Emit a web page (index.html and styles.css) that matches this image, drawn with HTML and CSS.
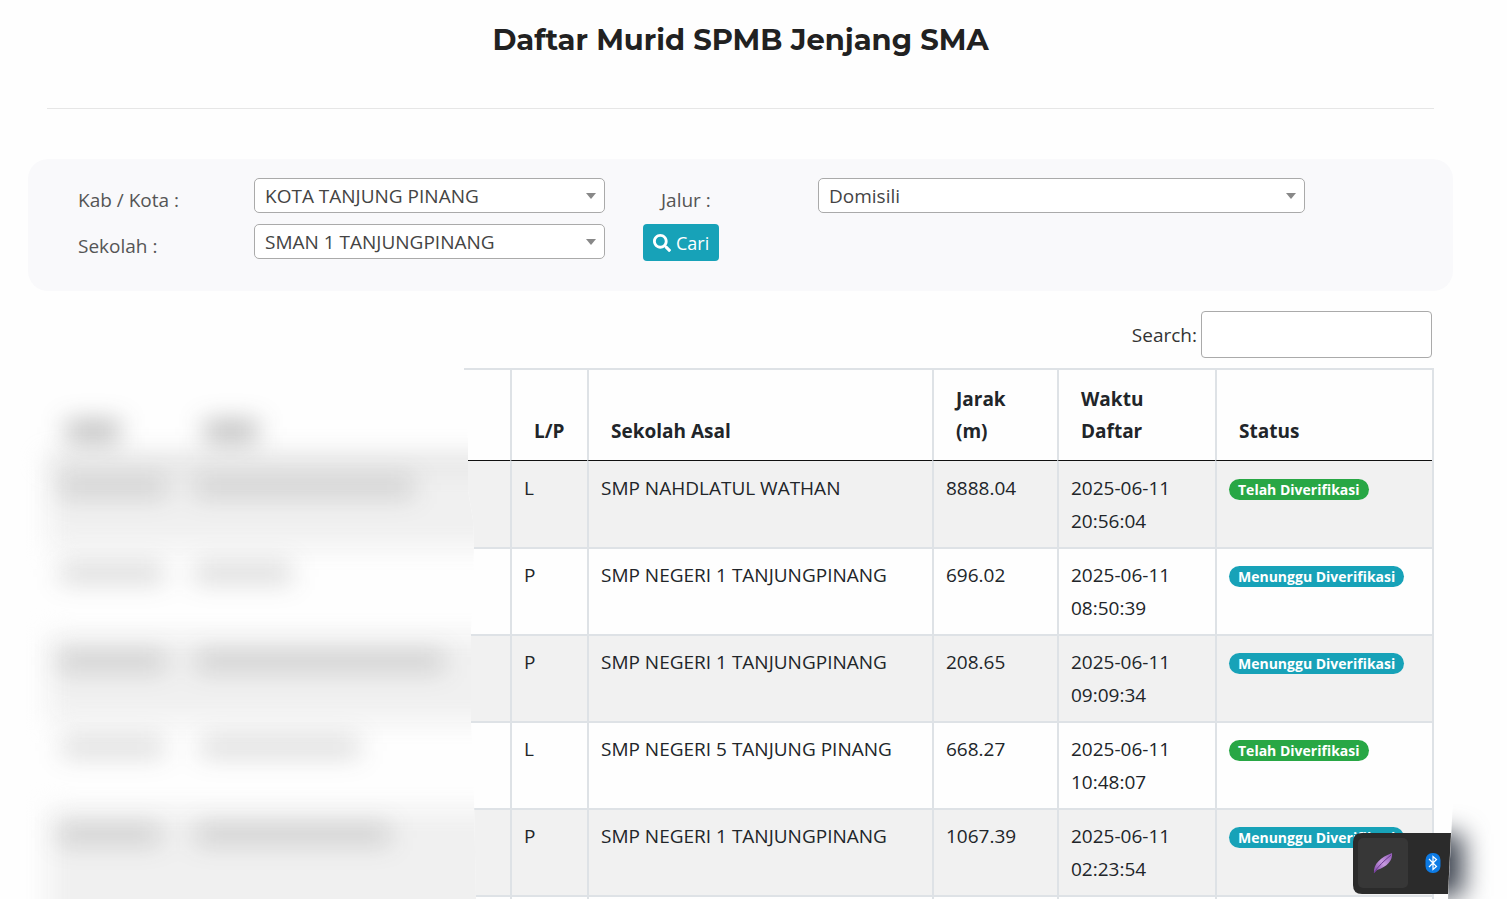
FILE: index.html
```html
<!DOCTYPE html>
<html lang="id">
<head>
  <meta charset="UTF-8">
  <meta name="viewport" content="width=device-width, initial-scale=1">
  <title>Daftar Murid SPMB Jenjang SMA</title>
  <link rel="stylesheet" href="styles.css">
</head>
<body>

  <main class="page">
    <h1>Daftar Murid SPMB Jenjang SMA</h1>
    <hr>

    <form class="filter">
      <label for="kota">Kab / Kota :</label>
      <div class="select-box">
        <select id="kota"><option>KOTA TANJUNG PINANG</option></select>
      </div>
      <label for="jalur" class="label-jalur">Jalur :</label>
      <div class="select-box">
        <select id="jalur"><option>Domisili</option></select>
      </div>
      <label for="sekolah">Sekolah :</label>
      <div class="select-box">
        <select id="sekolah"><option>SMAN 1 TANJUNGPINANG</option></select>
      </div>
      <div class="filter-action">
        <button type="button" class="cari-btn">
          <svg width="18" height="18" viewBox="0 0 512 512" fill="currentColor" aria-hidden="true"><path d="M505 442.700L405.300 343c-4.500-4.500-10.600-7-17-7H372c27.600-35.300 44-79.700 44-128C416 93.100 322.900 0 208 0S0 93.100 0 208s93.100 208 208 208c48.300 0 92.700-16.400 128-44v16.300c0 6.400 2.500 12.500 7 17l99.700 99.700c9.400 9.400 24.600 9.400 33.900 0l28.300-28.300c9.400-9.400 9.400-24.600.1-34zM208 336c-70.700 0-128-57.200-128-128 0-70.700 57.200-128 128-128 70.700 0 128 57.200 128 128 0 70.700-57.200 128-128 128z"/></svg>
          Cari
        </button>
      </div>
    </form>

    <section class="daftar">
      <div class="search">
        <label for="search">Search:</label>
        <input type="search" id="search">
      </div>

      <table>
        <colgroup>
          <col>
          <col class="col-nama">
          <col class="col-lp">
          <col class="col-asal">
          <col class="col-jarak">
          <col class="col-waktu">
          <col class="col-status">
        </colgroup>
        <thead>
          <tr>
            <th></th>
            <th></th>
            <th>L/P</th>
            <th>Sekolah Asal</th>
            <th>Jarak (m)</th>
            <th>Waktu Daftar</th>
            <th>Status</th>
          </tr>
        </thead>
        <tbody>
          <tr>
            <td></td>
            <td></td>
            <td>L</td>
            <td>SMP NAHDLATUL WATHAN</td>
            <td>8888.04</td>
            <td>2025-06-11 20:56:04</td>
            <td><span class="badge badge-success">Telah Diverifikasi</span></td>
          </tr>
          <tr>
            <td></td>
            <td></td>
            <td>P</td>
            <td>SMP NEGERI 1 TANJUNGPINANG</td>
            <td>696.02</td>
            <td>2025-06-11 08:50:39</td>
            <td><span class="badge badge-info">Menunggu Diverifikasi</span></td>
          </tr>
          <tr>
            <td></td>
            <td></td>
            <td>P</td>
            <td>SMP NEGERI 1 TANJUNGPINANG</td>
            <td>208.65</td>
            <td>2025-06-11 09:09:34</td>
            <td><span class="badge badge-info">Menunggu Diverifikasi</span></td>
          </tr>
          <tr>
            <td></td>
            <td></td>
            <td>L</td>
            <td>SMP NEGERI 5 TANJUNG PINANG</td>
            <td>668.27</td>
            <td>2025-06-11 10:48:07</td>
            <td><span class="badge badge-success">Telah Diverifikasi</span></td>
          </tr>
          <tr>
            <td></td>
            <td></td>
            <td>P</td>
            <td>SMP NEGERI 1 TANJUNGPINANG</td>
            <td>1067.39</td>
            <td>2025-06-11 02:23:54</td>
            <td><span class="badge badge-info">Menunggu Diverifikasi</span></td>
          </tr>
          <tr>
            <td></td>
            <td></td>
            <td></td>
            <td></td>
            <td></td>
            <td></td>
            <td></td>
          </tr>
        </tbody>
      </table>
    </section>
  </main>

  <!-- sensor data murid -->
  <svg class="sensor" width="480" height="599" viewBox="0 300 480 599" aria-hidden="true">
    <defs>
      <clipPath id="sensor-clip">
        <path d="M20 300H464V370L468 440V490L473 520L474 548L471 630V722L474 800L476 899H20Z"/>
      </clipPath>
      <filter id="blur" filterUnits="userSpaceOnUse" x="-60" y="240" width="720" height="760" color-interpolation-filters="sRGB">
        <feGaussianBlur stdDeviation="13"/>
      </filter>
    </defs>
    <g clip-path="url(#sensor-clip)">
      <rect x="20" y="300" width="460" height="600" fill="#fefefe"/>
      <g filter="url(#blur)">
        <path d="M48 461H640V548H48ZM48 635H640V722H48ZM48 809H640V960H48Z" fill="#f0f0f0"/>
        <path d="M48 460H640V462H48Z" fill="#555"/>
      </g>
      <g filter="url(#blur)">
        <path d="M66 422H120V440H66ZM204 422H258V440H204Z" fill="#303030" fill-opacity=".38"/>
        <path d="M58 478H168V496H58ZM194 478H414V496H194Z" fill="#303030" fill-opacity=".19"/>
        <path d="M60 564H164V582H60ZM194 564H292V582H194Z" fill="#303030" fill-opacity=".2"/>
        <path d="M58 652H166V670H58ZM196 652H444V670H196Z" fill="#303030" fill-opacity=".2"/>
        <path d="M62 738H164V756H62ZM200 738H360V756H200Z" fill="#303030" fill-opacity=".19"/>
        <path d="M58 825H160V843H58ZM196 825H390V843H196Z" fill="#303030" fill-opacity=".2"/>
      </g>
    </g>
  </svg>

  <!-- panel tray -->
  <svg class="tray" width="154" height="99" viewBox="1353 800 154 99" aria-hidden="true">
    <defs>
      <clipPath id="tray-edge"><path d="M1453 800H1507V899H1448Z"/></clipPath>
      <filter id="tray-blur" filterUnits="userSpaceOnUse" x="1360" y="750" width="200" height="220" color-interpolation-filters="sRGB">
        <feGaussianBlur stdDeviation="13"/>
      </filter>
      <linearGradient id="feather" x1="0" y1="1" x2="1" y2="0">
        <stop offset="0" stop-color="#7d43a6"/>
        <stop offset=".5" stop-color="#c79be0"/>
        <stop offset="1" stop-color="#8e56b5"/>
      </linearGradient>
    </defs>
    <g clip-path="url(#tray-edge)">
      <path d="M1448 800H1507V899H1448Z" fill="#fefefe"/>
      <path d="M1390 834H1463V896H1390Z" fill="#3b424e" filter="url(#tray-blur)"/>
    </g>
    <path d="M1362 833H1451L1448 894H1362Q1353 894 1353 885V842Q1353 833 1362 833Z" fill="#2b2b2b"/>
    <rect x="1358" y="838" width="50" height="50" rx="5" fill="#373737"/>
    <path d="M1374 873C1373 864 1381 857 1392 853C1393 860 1387 867 1377 870Z" fill="url(#feather)"/>
    <path d="M1374 873C1378 866 1384 861 1391 855" fill="none" stroke="#6c3791" stroke-width="1"/>
    <rect x="1425.500" y="853" width="15" height="20" rx="7" fill="#0d7be5"/>
    <path d="M1429 859L1436.500 866.500L1433 869.500V856.500L1436.500 859.500L1429 867" fill="none" stroke="#fff" stroke-width="1.200"/>
  </svg>

</body>
</html>
```
FILE: styles.css
```css
* { box-sizing: border-box; margin: 0; padding: 0; }

body {
  position: relative;
  height: 100vh;
  overflow: hidden;
  font-family: "Open Sans", sans-serif;
  font-size: 19px;
  color: #212529;
  background-color: #fefefe;
}

.page {
  margin: 0 54px 0 28px;
}

h1 {
  padding-top: 20px;
  font-family: Montserrat, Inter, sans-serif;
  font-size: 29px;
  font-weight: 700;
  line-height: 40px;
  text-align: center;
  color: #212121;
}

hr {
  margin: 48px 19px 50px;
  border: none;
  border-top: 1px solid #e6e6e6;
}

.filter {
  display: grid;
  grid-template-columns: 176fr 351fr 213fr 487fr;
  grid-auto-rows: 46px;
  align-items: start;
  padding: 19px 148px 21px 50px;
  border-radius: 20px;
  background-color: #f9f9fb;
}

.filter label {
  line-height: 44px;
  color: #555;
}

.filter .label-jalur {
  padding-left: 56px;
}

.filter-action {
  padding-left: 38px;
}

.select-box {
  position: relative;
}

.select-box::after {
  content: "";
  position: absolute;
  top: 15px;
  right: 9px;
  border: 5px solid transparent;
  border-top: 6px solid #888;
  border-bottom: none;
  pointer-events: none;
}

.select-box select {
  display: block;
  width: 100%;
  height: 35px;
  padding: 1px 24px 0 10px;
  appearance: none;
  border: 1px solid #aaa;
  border-radius: 5px;
  background-color: #fff;
  font-family: inherit;
  font-size: 19px;
  color: #444;
}

.cari-btn {
  display: flex;
  align-items: center;
  gap: 5px;
  height: 37px;
  padding: 0 10px;
  border: none;
  border-radius: 4px;
  background-color: #17a2b8;
  color: #fff;
  font-family: inherit;
  font-size: 18px;
  cursor: pointer;
}

.daftar {
  padding: 20px 19px 0;
}

.search {
  display: flex;
  justify-content: flex-end;
  align-items: center;
  gap: 4px;
  margin-bottom: 10px;
  padding-right: 2px;
  color: #333;
}

.search input {
  width: 231px;
  height: 47px;
  padding: 0 8px;
  border: 1px solid #aaa;
  border-radius: 4px;
  background-color: #fff;
  font-family: inherit;
  font-size: 19px;
}

table {
  width: 100%;
  table-layout: fixed;
  border-collapse: separate;
  border-spacing: 0;
  border-top: 2px solid #dee2e6;
  border-right: 2px solid #dee2e6;
}

.col-nama { width: 324px; }
.col-lp { width: 77px; }
.col-asal { width: 345px; }
.col-jarak { width: 125px; }
.col-waktu { width: 158px; }
.col-status { width: 217px; }

th {
  padding: 13px 22px;
  border-left: 2px solid #dee2e6;
  border-bottom: 1px solid #111;
  font-weight: 700;
  line-height: 32px;
  text-align: left;
  vertical-align: bottom;
}

td {
  padding: 10px 12px 9px;
  border-left: 2px solid #dee2e6;
  border-bottom: 2px solid #dee2e6;
  line-height: 33px;
  vertical-align: top;
}

tbody tr:first-child td {
  padding-top: 11px;
}

tbody tr:nth-child(odd) {
  background-color: #f1f1f1;
}

tbody tr:last-child {
  background-color: #fefefe;
}

.badge {
  display: inline-block;
  padding: 0 9px;
  border-radius: 11px;
  font-size: 14px;
  font-weight: 700;
  line-height: 21px;
  color: #fff;
}

.badge-success { background-color: #28a745; }
.badge-info { background-color: #17a2b8; }

.sensor {
  position: absolute;
  top: 300px;
  left: 0;
}

.tray {
  position: fixed;
  right: 0;
  bottom: 0;
}
```
